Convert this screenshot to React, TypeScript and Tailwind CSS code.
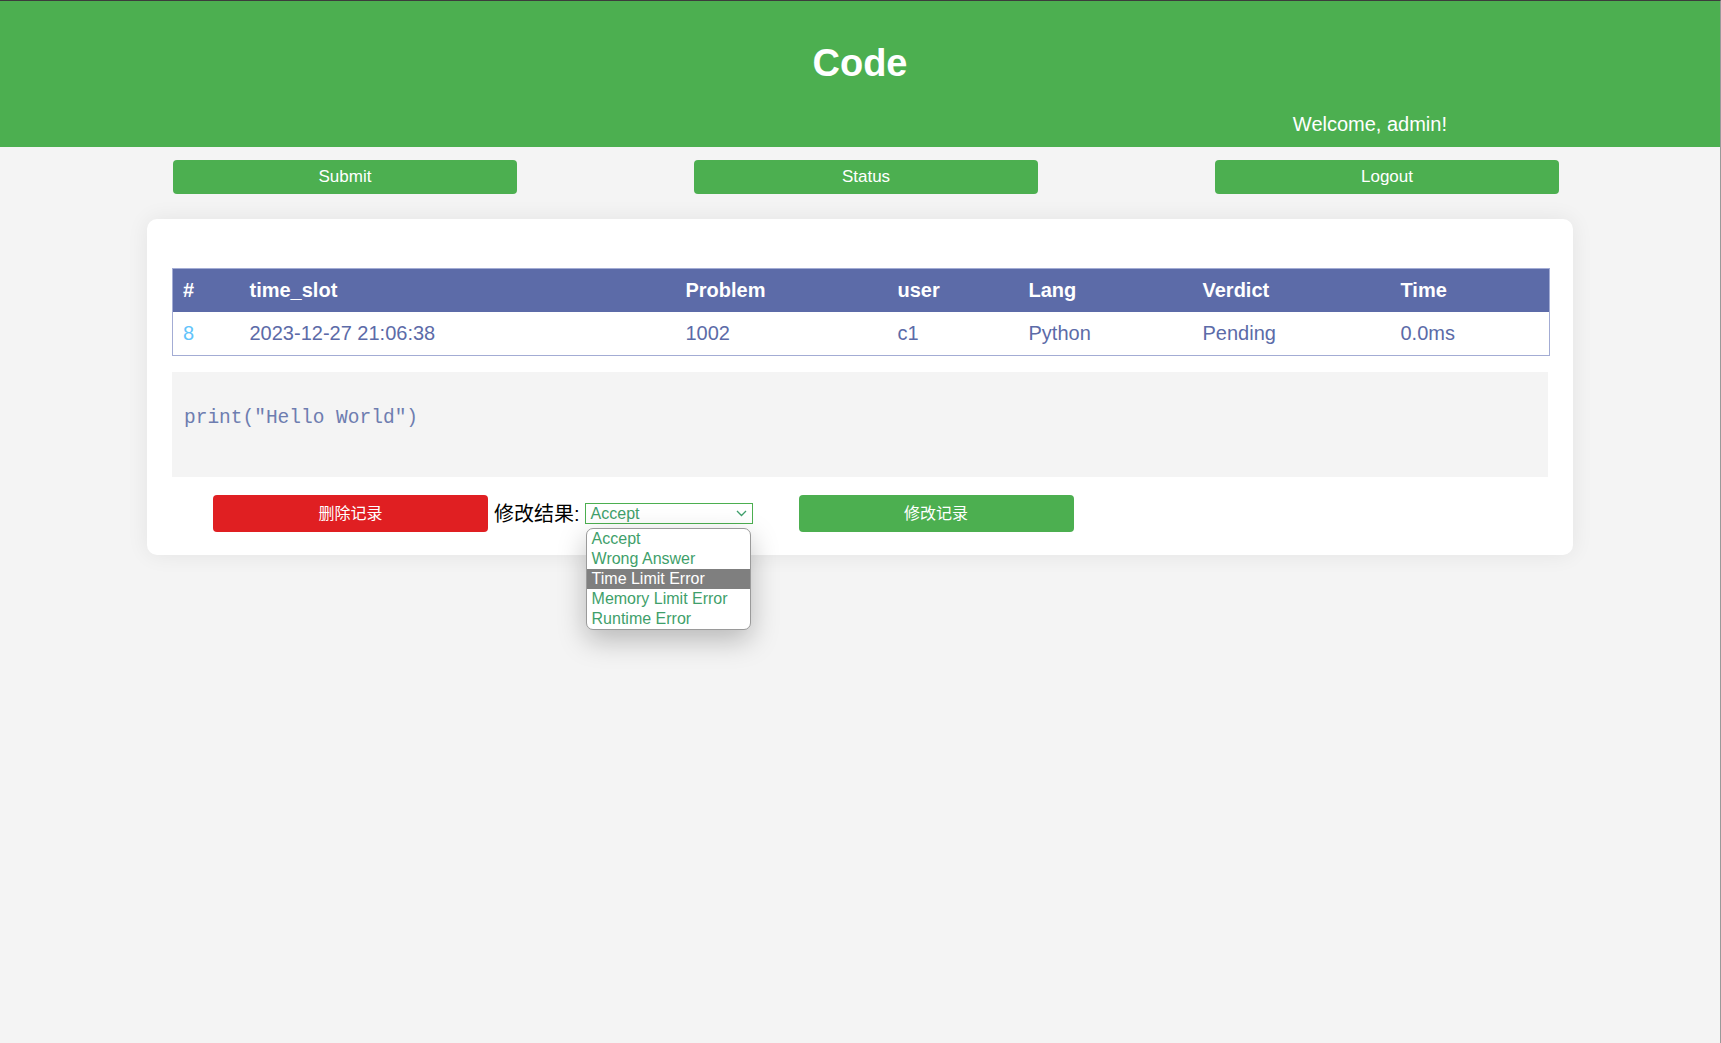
const columns = [
  { label: "#", width: "w-[67px]" },
  { label: "time_slot", width: "w-[436px]" },
  { label: "Problem", width: "w-[212px]" },
  { label: "user", width: "w-[131px]" },
  { label: "Lang", width: "w-[174px]" },
  { label: "Verdict", width: "w-[198px]" },
  { label: "Time", width: "w-[159px]" },
];

const verdicts = [
  "Accept",
  "Wrong Answer",
  "Time Limit Error",
  "Memory Limit Error",
  "Runtime Error",
];

function NavButton({ label }: { label: string }) {
  return (
    <button className="flex h-[34px] w-[344px] items-center justify-center rounded-[4px] bg-[#4caf50] text-[17px] text-white">
      {label}
    </button>
  );
}

function VerdictSelect() {
  return (
    <div className="relative ml-[5px]">
      <div className="flex h-[21px] w-[168px] items-center justify-between border border-[#4caf50] bg-white pl-[5px] pr-[5px] text-[16px] leading-none text-[#3f9f6b]">
        <span>Accept</span>
        <svg width="11" height="7" viewBox="0 0 11 7" fill="none">
          <path d="M1 1l4.5 4.5L10 1" stroke="#3f9f6b" strokeWidth="1.3" />
        </svg>
      </div>
      <ul className="absolute left-[1px] top-[25px] z-10 w-[165px] overflow-hidden rounded-[7px] border border-[#9a9a9a] bg-white shadow-[0_10px_28px_rgba(0,0,0,0.25)]">
        {verdicts.map((v) => (
          <li
            key={v}
            className={
              v === "Time Limit Error"
                ? "flex h-[20px] items-center bg-[#7f7f7f] pl-[5px] text-[16px] text-white"
                : "flex h-[20px] items-center pl-[5px] text-[16px] text-[#3f9f6b]"
            }
          >
            {v}
          </li>
        ))}
      </ul>
    </div>
  );
}

export default function App() {
  return (
    <div className="h-[1043px] w-full overflow-hidden border-t border-r border-t-[#3c3c3c] border-r-[#9a9a9a] bg-[#f4f4f4] font-['Liberation_Sans','Noto_Sans_CJK_SC',sans-serif]">
      <header className="flex h-[146px] flex-col bg-[#4caf50] pt-[40px] text-white">
        <h1 className="text-center text-[38px] font-bold leading-[44px]">Code</h1>
        <p className="mt-[27px] pr-[273px] text-right text-[20px] leading-[24px]">
          Welcome, admin!
        </p>
      </header>

      <nav className="mt-[13px] flex gap-[177px] pl-[173px]">
        <NavButton label="Submit" />
        <NavButton label="Status" />
        <NavButton label="Logout" />
      </nav>

      <main className="ml-[147px] mt-[25px] w-[1426px] rounded-[10px] bg-white px-[25px] pb-[23px] pt-[49px] shadow-[0_0_22px_rgba(0,0,0,0.07)]">
        <table className="w-full table-fixed border-collapse border border-[#a3acd4] text-[20px]">
          <thead>
            <tr className="h-[43px] bg-[#5c6ba8] text-left text-white">
              {columns.map((c) => (
                <th key={c.label} className={`${c.width} pl-[10px] font-bold`}>
                  {c.label}
                </th>
              ))}
            </tr>
          </thead>
          <tbody>
            <tr className="h-[44px] text-[#5c6ba8]">
              <td className="pl-[10px] text-[#62c4fb]">8</td>
              <td className="pl-[10px]">2023-12-27 21:06:38</td>
              <td className="pl-[10px]">1002</td>
              <td className="pl-[10px]">c1</td>
              <td className="pl-[10px]">Python</td>
              <td className="pl-[10px]">Pending</td>
              <td className="pl-[10px]">0.0ms</td>
            </tr>
          </tbody>
        </table>

        <pre className="mt-[16px] h-[105px] bg-[#f4f4f4] pl-[12px] pt-[34px] font-['Liberation_Mono',monospace] text-[19.5px] leading-[24px] text-[#6e7db0]">
          print("Hello World")
        </pre>

        <div className="mt-[18px] flex h-[37px] items-center">
          <button className="ml-[41px] flex h-[37px] w-[275px] items-center justify-center rounded-[4px] bg-[#e01f22] text-[16px] text-white">
            删除记录
          </button>
          <span className="ml-[6px] text-[20px] text-black">修改结果:</span>
          <VerdictSelect />
          <button className="ml-[46px] flex h-[37px] w-[275px] items-center justify-center rounded-[4px] bg-[#4caf50] text-[16px] text-white">
            修改记录
          </button>
        </div>
      </main>
    </div>
  );
}
